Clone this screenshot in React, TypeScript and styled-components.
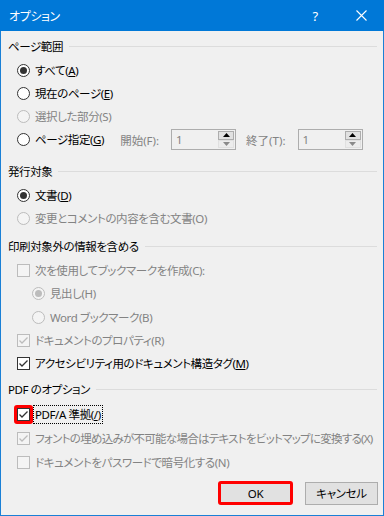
import React from "react";
import styled, { createGlobalStyle } from "styled-components";

const Global = createGlobalStyle`
  html, body { margin: 0; padding: 0; background: #f0f0f0; }
  * { box-sizing: border-box; }
`;

const FONT = `"Noto Sans", "Noto Sans CJK JP", sans-serif`;

const Dialog = styled.div`
  width: 384px;
  height: 516px;
  border: 1px solid #1a80d6;
  border-top: none;
  background: #f0f0f0;
  display: flex;
  flex-direction: column;
  font-family: ${FONT};
  font-size: 11.5px;
  letter-spacing: -0.4px;
  font-feature-settings: "palt";
  color: #000;
`;

const TitleBar = styled.div`
  height: 31px;
  margin: 0 -1px;
  background: #0078d7;
  color: #fff;
  display: flex;
  align-items: center;
  padding-left: 9px;
  flex-shrink: 0;
`;

const Title = styled.span`
  flex: 1;
  font-size: 12px;
`;

const TitleButton = styled.div`
  width: 46px;
  height: 31px;
  display: flex;
  align-items: center;
  justify-content: center;
  font-size: 13px;
`;

const Body = styled.div`
  flex: 1;
  display: flex;
  flex-direction: column;
  padding: 4px 6px 0 7px;
`;

const Section = styled.div<{ $mt: number }>`
  display: flex;
  flex-direction: column;
  margin-top: ${(p) => p.$mt}px;
`;

const Header = styled.div`
  height: 22px;
  display: flex;
  align-items: center;
  gap: 6px;
  margin-bottom: 2px;
  &::after {
    content: "";
    flex: 1;
    height: 1px;
    background: #dcdcdc;
  }
`;

const Row = styled.div<{ $indent?: number; $h?: number; $disabled?: boolean }>`
  height: ${(p) => p.$h ?? 23}px;
  display: flex;
  align-items: center;
  padding-left: ${(p) => 9 + (p.$indent ?? 0)}px;
  color: ${(p) => (p.$disabled ? "#838383" : "#000")};
  white-space: nowrap;
`;

const Label = styled.span<{ $focus?: boolean; $tight?: boolean }>`
  margin-left: 3px;
  padding: 1px 1px;
  border: 1px dotted ${(p) => (p.$focus ? "#000" : "transparent")};
  line-height: 15px;
  ${(p) => (p.$tight ? "letter-spacing: -0.72px;" : "")}
`;

const RadioBox = styled.span<{ $disabled?: boolean }>`
  width: 13px;
  height: 13px;
  border-radius: 50%;
  border: 1px solid ${(p) => (p.$disabled ? "#bcbcbc" : "#333")};
  background: ${(p) => (p.$disabled ? "#f4f4f4" : "#fff")};
  display: flex;
  align-items: center;
  justify-content: center;
  flex-shrink: 0;
`;

const Dot = styled.span<{ $disabled?: boolean }>`
  width: 7px;
  height: 7px;
  border-radius: 50%;
  background: ${(p) => (p.$disabled ? "#bcbcbc" : "#333")};
`;

const CheckFrame = styled.span<{ $hl?: boolean }>`
  display: flex;
  padding: ${(p) => (p.$hl ? "0" : "3px")};
  border: ${(p) => (p.$hl ? "3px solid #f00" : "none")};
  border-radius: 3px;
  margin: -3px;
`;

const CheckBox = styled.span<{ $disabled?: boolean }>`
  width: 13px;
  height: 13px;
  border: 1px solid ${(p) => (p.$disabled ? "#bcbcbc" : "#333")};
  background: ${(p) => (p.$disabled ? "#f4f4f4" : "#fff")};
  display: flex;
  align-items: center;
  justify-content: center;
  flex-shrink: 0;
`;

const SpinLabel = styled.span<{ $ml: number }>`
  margin-left: ${(p) => p.$ml}px;
  color: #838383;
  letter-spacing: 0;
`;

const SpinBox = styled.div`
  margin-left: 12px;
  width: 65px;
  height: 21px;
  border: 1px solid #adadad;
  background: #f0f0f0;
  display: flex;
  align-items: stretch;
  padding: 1px;
`;

const SpinValue = styled.span`
  flex: 1;
  color: #838383;
  padding-left: 3px;
  display: flex;
  align-items: center;
`;

const SpinButtons = styled.div`
  width: 16px;
  display: flex;
  flex-direction: column;
`;

const SpinBtn = styled.div<{ $enabled?: boolean }>`
  flex: 1;
  display: flex;
  align-items: center;
  justify-content: center;
  background: ${(p) => (p.$enabled ? "#e1e1e1" : "#ececec")};
  border: 1px solid ${(p) => (p.$enabled ? "#adadad" : "#e0e0e0")};
`;

const Footer = styled.div`
  display: flex;
  justify-content: flex-end;
  gap: 12px;
  margin: 7px -1px 0 0;
  align-items: center;
`;

const Button = styled.button<{ $hl?: boolean }>`
  width: ${(p) => (p.$hl ? 75 : 73)}px;
  height: ${(p) => (p.$hl ? 24 : 23)}px;
  background: #e1e1e1;
  border: ${(p) => (p.$hl ? "3px solid #f00" : "1px solid #adadad")};
  border-radius: ${(p) => (p.$hl ? 3 : 0)}px;
  font-family: ${FONT};
  font-size: 11.5px;
  letter-spacing: -0.3px;
  font-feature-settings: "palt";
  color: #000;
  padding: 0;
`;

const Check = ({ disabled }: { disabled?: boolean }) => (
  <svg width="11" height="11" viewBox="0 0 11 11">
    <polyline
      points="1.5,5.5 4,8 9.5,2.5"
      fill="none"
      stroke={disabled ? "#bcbcbc" : "#333"}
      strokeWidth="1.3"
    />
  </svg>
);

const Radio = ({ checked, disabled }: { checked?: boolean; disabled?: boolean }) => (
  <RadioBox $disabled={disabled}>{checked && <Dot $disabled={disabled} />}</RadioBox>
);

const CB = ({ checked, disabled, hl }: { checked?: boolean; disabled?: boolean; hl?: boolean }) => (
  <CheckFrame $hl={hl}>
    <CheckBox $disabled={disabled}>{checked && <Check disabled={disabled} />}</CheckBox>
  </CheckFrame>
);

const Spin = () => (
  <SpinBox>
    <SpinValue>1</SpinValue>
    <SpinButtons>
      <SpinBtn $enabled>
        <svg width="7" height="4" viewBox="0 0 7 4">
          <polygon points="0,4 3.5,0 7,4" fill="#000" />
        </svg>
      </SpinBtn>
      <SpinBtn>
        <svg width="7" height="4" viewBox="0 0 7 4">
          <polygon points="0,0 3.5,4 7,0" fill="#8a8a8a" />
        </svg>
      </SpinBtn>
    </SpinButtons>
  </SpinBox>
);

export default function App() {
  return (
    <>
      <Global />
      <Dialog>
        <TitleBar>
          <Title>オプション</Title>
          <TitleButton>?</TitleButton>
          <TitleButton>
            <svg width="11" height="11" viewBox="0 0 11 11">
              <path d="M0.5 0.5 L10.5 10.5 M10.5 0.5 L0.5 10.5" stroke="#fff" strokeWidth="1.1" />
            </svg>
          </TitleButton>
        </TitleBar>
        <Body>
          <Section $mt={0}>
            <Header>ページ範囲</Header>
            <Row>
              <Radio checked />
              <Label>すべて(<u>A</u>)</Label>
            </Row>
            <Row>
              <Radio />
              <Label>現在のページ(<u>E</u>)</Label>
            </Row>
            <Row $disabled>
              <Radio disabled />
              <Label>選択した部分(S)</Label>
            </Row>
            <Row>
              <Radio />
              <Label>ページ指定(<u>G</u>)</Label>
              <SpinLabel $ml={14}>開始(F):</SpinLabel>
              <Spin />
              <SpinLabel $ml={10}>終了(T):</SpinLabel>
              <Spin />
            </Row>
          </Section>
          <Section $mt={9}>
            <Header>発行対象</Header>
            <Row>
              <Radio checked />
              <Label>文書(<u>D</u>)</Label>
            </Row>
            <Row $disabled>
              <Radio disabled />
              <Label>変更とコメントの内容を含む文書(O)</Label>
            </Row>
          </Section>
          <Section $mt={5}>
            <Header>印刷対象外の情報を含める</Header>
            <Row $disabled>
              <CB disabled />
              <Label>次を使用してブックマークを作成(C):</Label>
            </Row>
            <Row $disabled $indent={15}>
              <Radio checked disabled />
              <Label>見出し(H)</Label>
            </Row>
            <Row $disabled $indent={15} $h={24}>
              <Radio disabled />
              <Label>Word ブックマーク(B)</Label>
            </Row>
            <Row $disabled>
              <CB checked disabled />
              <Label>ドキュメントのプロパティ(R)</Label>
            </Row>
            <Row>
              <CB checked />
              <Label>アクセシビリティ用のドキュメント構造タグ(<u>M</u>)</Label>
            </Row>
          </Section>
          <Section $mt={3}>
            <Header>PDF のオプション</Header>
            <Row $h={24}>
              <CB checked hl />
              <Label $focus>PDF/A 準拠(<u>/</u>)</Label>
            </Row>
            <Row $disabled $h={24}>
              <CB checked disabled />
              <Label $tight>フォントの埋め込みが不可能な場合はテキストをビットマップに変換する(X)</Label>
            </Row>
            <Row $disabled $h={24}>
              <CB disabled />
              <Label>ドキュメントをパスワードで暗号化する(N)</Label>
            </Row>
          </Section>
          <Footer>
            <Button $hl>OK</Button>
            <Button>キャンセル</Button>
          </Footer>
        </Body>
      </Dialog>
    </>
  );
}
